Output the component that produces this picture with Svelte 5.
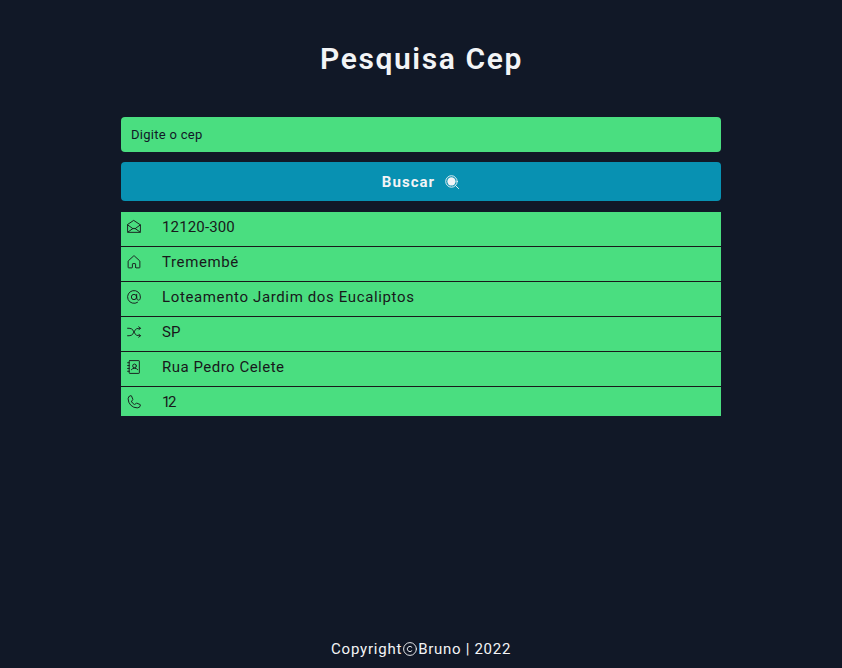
<script>
  const rows = [
    { icon: 'mail', text: '12120-300', spacing: 0.15 },
    { icon: 'house', text: 'Tremembé', spacing: 0.62 },
    { icon: 'at', text: 'Loteamento Jardim dos Eucaliptos', spacing: 0.63 },
    { icon: 'shuffle', text: 'SP', spacing: 0 },
    { icon: 'book', text: 'Rua Pedro Celete', spacing: 0.5 },
    { icon: 'phone', text: '12', spacing: -2.4 }
  ];
  const icons = {
    mail: 'M32 96v104a8 8 0 0 0 8 8h176a8 8 0 0 0 8-8V96L128 32ZM110 152 34 206M146 152l76 54M224 96l-78 56h-36L32 96',
    house: 'M152 208v-48a8 8 0 0 0-8-8h-32a8 8 0 0 0-8 8v48a8 8 0 0 1-8 8H48a8 8 0 0 1-8-8v-92a8 8 0 0 1 3-6l80-73a8 8 0 0 1 10 0l80 73a8 8 0 0 1 3 6v92a8 8 0 0 1-8 8h-48a8 8 0 0 1-8-8',
    at: 'M168 128a40 40 0 1 1-80 0 40 40 0 0 1 80 0M181 208a96 96 0 1 1 43-80c0 27-8 48-28 48s-28-21-28-48V88',
    shuffle: 'm200 160 24 24-24 24M200 48l24 24-24 24M32 72h23a72 72 0 0 1 59 30l28 52a72 72 0 0 0 59 30h23M32 184h23a72 72 0 0 0 59-30l28-52a72 72 0 0 1 59-30h23',
    book: 'M64 32h136a8 8 0 0 1 8 8v176a8 8 0 0 1-8 8H64a8 8 0 0 1-8-8V40a8 8 0 0 1 8-8M32 64h24M32 106h24M32 150h24M32 192h24M164 112a28 28 0 1 1-56 0 28 28 0 0 1 56 0M88 168a60 60 0 0 1 96 0',
    phone: 'M92 124a84 84 0 0 0 40 40 8 8 0 0 0 8-1l25-16a8 8 0 0 1 8-1l47 20a8 8 0 0 1 5 8 48 48 0 0 1-48 42A136 136 0 0 1 40 79a48 48 0 0 1 42-47 8 8 0 0 1 8 5l20 47a8 8 0 0 1-1 8l-16 25a8 8 0 0 0-1 7'
  };
</script>

<div class="page">
  <h1>Pesquisa Cep</h1>
  <main>
    <input type="text" placeholder="Digite o cep" />
    <button type="button">
      <span>Buscar</span>
      <svg viewBox="8 8 240 240"><circle cx="120" cy="120" r="86" /><circle class="lens" cx="120" cy="120" r="62" /><path d="m181 181 46 46" /></svg>
    </button>
    <ul>
      {#each rows as row}
        <li>
          <svg viewBox="8 8 240 240"><path d={icons[row.icon]} /></svg>
          <span style:letter-spacing="{row.spacing}px">{row.text}</span>
        </li>
      {/each}
    </ul>
  </main>
  <footer>
    <span class="word">Copyright</span><svg viewBox="8 8 240 240"><circle cx="128" cy="128" r="96" /><path d="M156 156a40 40 0 1 1 0-56" /></svg><span class="year">Bruno | 2022</span>
  </footer>
</div>

<style>
  :global(body) { margin: 0; background: #111827; }
  .page {
    box-sizing: border-box;
    height: 668px;
    display: flex;
    flex-direction: column;
    align-items: center;
    background: #111827;
    color: #f3f4f6;
    font-family: Roboto, sans-serif;
  }
  h1 {
    margin: 39px 0 0 1px;
    height: 78px;
    font-size: 30px;
    line-height: 40px;
    font-weight: 600;
    letter-spacing: 1.6px;
    white-space: nowrap;
  }
  main { width: 600px; display: flex; flex-direction: column; }
  input {
    box-sizing: border-box;
    height: 35px;
    padding: 0 10px;
    border: 0;
    border-radius: 4px;
    background: #4ade80;
    font: 13px Roboto, sans-serif;
    letter-spacing: 0.28px;
  }
  input::placeholder { color: #111827; opacity: 1; }
  button {
    height: 39px;
    margin: 10px 0 11px;
    padding: 0;
    display: flex;
    align-items: center;
    justify-content: center;
    gap: 9px;
    border: 0;
    border-radius: 4px;
    background: #0891b2;
    color: #f3f4f6;
    font: 700 15px Roboto, sans-serif;
    letter-spacing: 1.05px;
  }
  ul { margin: 0; padding: 0; list-style: none; background: #4ade80; color: #18181b; }
  li {
    box-sizing: border-box;
    height: 35px;
    padding: 0 5px 4px;
    display: flex;
    align-items: center;
    gap: 20px;
    border-bottom: 1px solid #18181b;
    font-size: 15px;
    line-height: 30px;
  }
  li:last-child { height: 29px; border: 0; padding-bottom: 0; }
  li:last-child svg { position: relative; top: 0.5px; }
  svg {
    width: 16px;
    height: 16px;
    flex: none;
    fill: none;
    stroke: currentColor;
    stroke-width: 14;
    stroke-linecap: round;
    stroke-linejoin: round;
  }
  .lens { fill: currentColor; stroke: none; }
  footer {
    margin-top: auto;
    height: 38px;
    display: flex;
    align-items: center;
    font-size: 15px;
    white-space: nowrap;
  }
  .word { letter-spacing: 0.8px; }
  .year { letter-spacing: 0.7px; }
</style>
